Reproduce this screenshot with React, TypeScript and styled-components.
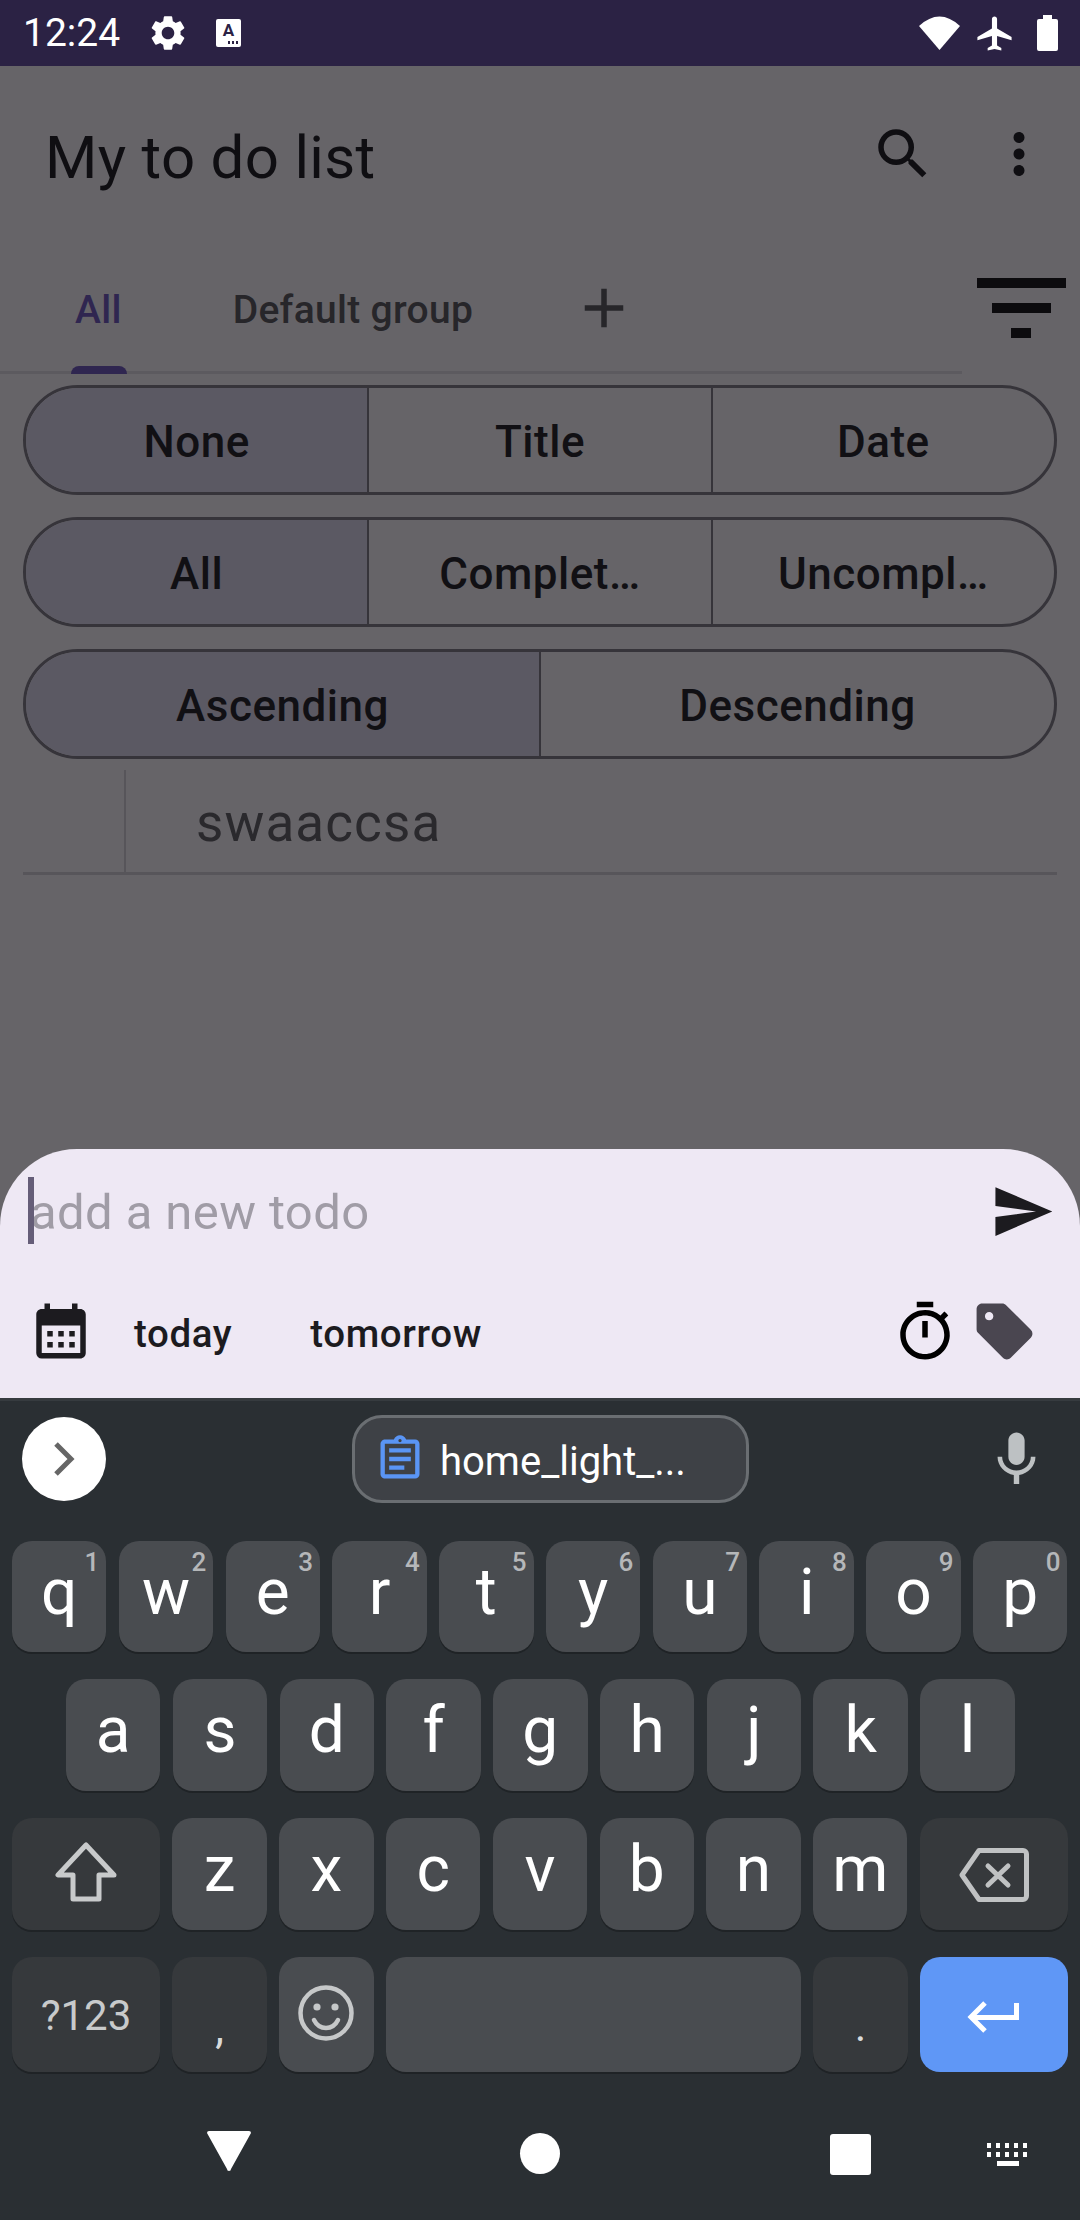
import React from "react";
import styled, { createGlobalStyle } from "styled-components";
import {
  MdSettings, MdAirplanemodeActive, MdSearch, MdMoreVert, MdAdd, MdSend,
  MdCalendarMonth, MdOutlineTimer, MdSell, MdMic, MdOutlineAssignment,
} from "react-icons/md";

const Global = createGlobalStyle`
  html, body { margin: 0; padding: 0; background: #666468; }
  body { font-family: Roboto, "Noto Sans", sans-serif; }
  * { box-sizing: border-box; }
`;

const Screen = styled.div`
  width: 1080px; height: 2220px; overflow: hidden;
  display: flex; flex-direction: column; background: #666468;
`;

const StatusBar = styled.div`
  height: 66px; flex: none; background: #2b2244; color: #fff;
  display: flex; align-items: center; padding-left: 23px; position: relative;
`;
const Time = styled.span`font-size: 39px; line-height: 46px; width: 95px; white-space: nowrap;`;
const Gear = styled(MdSettings)`margin-left: 29px; flex: none;`;
const ImeBadge = styled.div`
  width: 25px; height: 28px; margin-left: 27px; margin-top: -1px; background: #fff; border-radius: 2px;
  position: relative; color: #2b2244; font-size: 17px; font-weight: 700; line-height: 22px; text-align: center;
`;
const ImeDots = styled.i`
  position: absolute; right: 3px; bottom: 3px; width: 11px; height: 3px;
  background: radial-gradient(circle at center, #2b2244 1.3px, transparent 1.5px) 0 0 / 4px 3px repeat-x;
`;
const StatusRight = styled.div`margin-left: auto; display: flex; align-items: center;`;
const Plane = styled(MdAirplanemodeActive)`margin-left: 14px; margin-right: 22px; flex: none;`;
const Battery = styled.svg`margin-right: 22px; flex: none;`;

const Main = styled.div`flex: 1; min-height: 0; overflow: hidden; display: flex; flex-direction: column;`;

const AppBar = styled.div`
  height: 166px; flex: none; display: flex; align-items: flex-start; padding: 55px 28px 0 45px;
`;
const Title = styled.div`
  flex: 1; margin-top: 4px; font-size: 60px; line-height: 66px; letter-spacing: 0.3px; color: #0f0e12; white-space: nowrap;
`;
const BarIcon = styled.span`display: block; width: 66px; height: 66px; color: #0f0e12; margin-left: ${(p: { $gap?: number }) => p.$gap ?? 0}px;`;

const TabRow = styled.div`height: 142px; flex: none; display: flex; align-items: flex-start;`;
const TabStrip = styled.div`
  width: 962px; height: 142px; border-bottom: 3px solid #5c5a5f; position: relative;
  display: flex; align-items: flex-start; padding-left: 75px;
`;
const Tab = styled.div<{ $active?: boolean; $gap?: number }>`
  margin-top: 55px; margin-left: ${(p) => p.$gap ?? 0}px; font-size: 39px; line-height: 46px; font-weight: 500;
  letter-spacing: 0.3px; color: ${(p) => (p.$active ? "#2f2650" : "#27262a")}; white-space: nowrap;
`;
const TabIndicator = styled.div`
  position: absolute; left: 71px; bottom: -3px; width: 56px; height: 8px;
  background: #2f2650; border-radius: 8px 8px 0 0;
`;
const AddTab = styled(MdAdd)`margin-top: 43px; margin-left: 98px; color: #27262a; flex: none;`;
const FilterIcon = styled.svg`margin-top: 46px; margin-left: 15px; flex: none;`;

const Controls = styled.div`display: flex; flex-direction: column; gap: 22px; padding: 11px 23px 0;`;
const SegGroup = styled.div`
  height: 110px; border: 3px solid #36343a; border-radius: 55px; overflow: hidden; display: flex;
`;
const Seg = styled.div<{ $selected?: boolean }>`
  flex: 1; min-width: 0; display: flex; align-items: center; justify-content: center; padding-top: 4px;
  background: ${(p) => (p.$selected ? "#5b5963" : "transparent")};
  font-size: 44px; font-weight: 500; letter-spacing: 0.5px; color: #111014; white-space: nowrap;
  & + & { border-left: 2px solid #36343a; }
`;

const TodoRow = styled.div`
  height: 105px; margin: 11px 23px 0; flex: none; border-bottom: 3px solid #57555a; display: flex;
`;
const Slot = styled.div`width: 103px; border-right: 2px solid #57555a; flex: none;`;
const TodoText = styled.div`
  margin-left: 70px; margin-top: 23px; font-size: 53px; line-height: 60px; color: #2a292d; letter-spacing: 1.1px;
`;

const Sheet = styled.div`
  height: 249px; flex: none; background: #eee8f4; border-radius: 77px 77px 0 0;
  padding-top: 30px; display: flex; flex-direction: column; position: relative;
`;
const InputRow = styled.div`display: flex; align-items: flex-start; padding: 0 25px 0 30px; height: 65px;`;
const Caret = styled.div`position: absolute; left: 28px; top: 28px; width: 6px; height: 67px; background: #655d78;`;
const Placeholder = styled.div`margin-top: 6px; font-size: 49px; line-height: 56px; letter-spacing: 0.4px; color: #a09ca6; flex: 1;`;
const SendIcon = styled(MdSend)`color: #1c1b1f; flex: none;`;
const ActionRow = styled.div`display: flex; align-items: flex-start; padding: 0 42px 0 28px; margin-top: 54px;`;
const CalIcon = styled(MdCalendarMonth)`color: #1c1b1f; flex: none;`;
const DateChip = styled.div<{ $gap: number }>`
  margin-left: ${(p) => p.$gap}px; margin-top: 13px; font-size: 38.5px; line-height: 46px; font-weight: 500;
  letter-spacing: 0.6px; color: #1c1b1f;
`;
const TimerIcon = styled(MdOutlineTimer)`margin-left: auto; margin-top: 1px; color: #000; flex: none;`;
const TagIcon = styled(MdSell)`margin-left: 13px; color: #4a4650; flex: none;`;

const Keyboard = styled.div`
  height: 822px; flex: none; background: #2a2f33; border-top: 3px solid #363b3f; display: flex; flex-direction: column;
`;
const SuggestRow = styled.div`
  display: flex; align-items: center; height: 88px; margin-top: 14px; padding-right: 31px; flex: none;
`;
const Expand = styled.div`
  width: 84px; height: 84px; margin-left: 22px; border-radius: 50%; background: #fff;
  display: flex; align-items: center; justify-content: center; flex: none;
`;
const ClipChip = styled.div`
  width: 397px; height: 88px; margin-left: 246px; background: #3e4146; border: 3px solid #6a6e72; border-radius: 30px;
  display: flex; align-items: center; padding-left: 19px; flex: none;
`;
const ClipIcon = styled(MdOutlineAssignment)`color: #5a95f5; flex: none;`;
const ClipText = styled.span`margin-left: 14px; margin-top: 4px; font-size: 40px; color: #fff; white-space: nowrap;`;
const MicIcon = styled(MdMic)`margin-left: auto; color: #bdc1c3; flex: none;`;

const KeyGrid = styled.div`display: flex; flex-direction: column; gap: 27px; margin-top: 38px; padding: 0 12px;`;
const KeyRow = styled.div<{ $h: number; $inset?: number }>`
  display: flex; gap: 12.4px; height: ${(p) => p.$h}px; padding-left: ${(p) => p.$inset ?? 0}px; flex: none;
`;
const Key = styled.div<{ $w?: number; $tone?: "light" | "dark" | "blue" }>`
  width: ${(p) => p.$w ?? 94.4}px; flex: none; position: relative; border-radius: 20px;
  background: ${(p) => (p.$tone === "dark" ? "#36393c" : p.$tone === "blue" ? "#5f97f6" : "#494c50")};
  box-shadow: ${(p) => (p.$tone === "blue" ? "none" : "0 2px 0 #1f2326")};
  display: flex; justify-content: center; align-items: flex-start;
  padding-top: 20px; font-size: 64px; line-height: 64px; color: #fff;
`;
const Hint = styled.span`
  position: absolute; top: 6px; right: 7px; font-size: 26px; line-height: 30px; font-weight: 500; color: #b5b7b9;
`;
const SymbolLabel = styled.span`margin-top: 14px; font-size: 42px; line-height: 50px; color: #c8cacb; white-space: nowrap;`;
const PunctLabel = styled.span<{ $top: number }>`margin-top: ${(p) => p.$top}px; font-size: 44px; line-height: 50px; color: #d8dadb;`;
const KeyIcon = styled.svg<{ $top: number }>`margin-top: ${(p) => p.$top - 20}px; flex: none;`;

const NavBar = styled.div`display: flex; align-items: flex-start; padding: 59px 0 0 207px;`;
const HomeDot = styled.div`width: 40px; height: 41px; margin: 2px 0 0 269px; border-radius: 50%; background: #fff;`;
const RecentBox = styled.div`width: 41px; height: 41px; margin: 3px 0 0 270px; border-radius: 3px; background: #fff;`;
const KbdGlyph = styled.svg`margin: 12px 0 0 116px; flex: none;`;

const row1 = [["q","1"],["w","2"],["e","3"],["r","4"],["t","5"],["y","6"],["u","7"],["i","8"],["o","9"],["p","0"]];
const row2 = ["a","s","d","f","g","h","j","k","l"];
const row3 = ["z","x","c","v","b","n","m"];

export default function App() {
  return (
    <Screen>
      <Global />
      <StatusBar>
        <Time>12:24</Time>
        <Gear size={42} />
        <ImeBadge>A<ImeDots /></ImeBadge>
        <StatusRight>
          <svg width="41" height="34" viewBox="0 0 41 34" fill="#fff"><path d="M20.5 34 0 10Q20.5-9 41 10Z" /></svg>
          <Plane size={41} />
          <Battery width="21" height="36" viewBox="0 0 21 36" fill="#fff">
            <path d="M6 0h9v4h4a2 2 0 0 1 2 2v28a2 2 0 0 1-2 2H2a2 2 0 0 1-2-2V6a2 2 0 0 1 2-2h4z" />
          </Battery>
        </StatusRight>
      </StatusBar>
      <Main>
        <AppBar>
          <Title>My to do list</Title>
          <BarIcon><MdSearch size={66} /></BarIcon>
          <BarIcon $gap={50}><MdMoreVert size={66} /></BarIcon>
        </AppBar>
        <TabRow>
          <TabStrip>
            <Tab $active>All</Tab>
            <Tab $gap={111}>Default group</Tab>
            <AddTab size={66} />
            <TabIndicator />
          </TabStrip>
          <FilterIcon width="89" height="60" viewBox="0 0 89 60" fill="#0c0b0e">
            <rect x="0" y="0" width="89" height="10" />
            <rect x="15" y="25" width="59" height="10" />
            <rect x="34" y="50" width="20" height="10" />
          </FilterIcon>
        </TabRow>
        <Controls>
          <SegGroup>
            <Seg $selected>None</Seg>
            <Seg>Title</Seg>
            <Seg>Date</Seg>
          </SegGroup>
          <SegGroup>
            <Seg $selected>All</Seg>
            <Seg>Complet…</Seg>
            <Seg>Uncompl…</Seg>
          </SegGroup>
          <SegGroup>
            <Seg $selected>Ascending</Seg>
            <Seg>Descending</Seg>
          </SegGroup>
        </Controls>
        <TodoRow>
          <Slot />
          <TodoText>swaaccsa</TodoText>
        </TodoRow>
      </Main>
      <Sheet>
        <Caret />
        <InputRow>
          <Placeholder>add a new todo</Placeholder>
          <SendIcon size={65} />
        </InputRow>
        <ActionRow>
          <CalIcon size={66} />
          <DateChip $gap={40}>today</DateChip>
          <DateChip $gap={78}>tomorrow</DateChip>
          <TimerIcon size={66} />
          <TagIcon size={67} />
        </ActionRow>
      </Sheet>
      <Keyboard>
        <SuggestRow>
          <Expand>
            <svg width="22" height="34" viewBox="0 0 22 34" fill="none" stroke="#666" strokeWidth="5"><path d="M3 2 18 17 3 32" /></svg>
          </Expand>
          <ClipChip>
            <ClipIcon size={52} />
            <ClipText>home_light_...</ClipText>
          </ClipChip>
          <MicIcon size={65} />
        </SuggestRow>
        <KeyGrid>
          <KeyRow $h={111}>
            {row1.map(([k, n]) => <Key key={k}>{k}<Hint>{n}</Hint></Key>)}
          </KeyRow>
          <KeyRow $h={112} $inset={54}>
            {row2.map((k) => <Key key={k}>{k}</Key>)}
          </KeyRow>
          <KeyRow $h={112}>
            <Key $w={148} $tone="dark">
              <KeyIcon $top={24} width="62" height="60" viewBox="0 0 62 60" fill="none" stroke="#c8cacb" strokeWidth="5" strokeLinejoin="round">
                <path d="M31 3 3 33h15v24h26V33h15z" />
              </KeyIcon>
            </Key>
            {row3.map((k) => <Key key={k}>{k}</Key>)}
            <Key $w={148} $tone="dark">
              <KeyIcon $top={30} width="70" height="54" viewBox="0 0 70 54" fill="none" stroke="#c0c2c3" strokeWidth="5" strokeLinejoin="round">
                <path d="M20 2.500h44a3.500 3.500 0 0 1 3.500 3.500v42a3.500 3.500 0 0 1-3.500 3.500H20L3 27z" />
                <path d="M29 18l20 19M49 18 29 37" strokeWidth="5" strokeLinecap="round" />
              </KeyIcon>
            </Key>
          </KeyRow>
          <KeyRow $h={115}>
            <Key $w={148} $tone="dark"><SymbolLabel>?123</SymbolLabel></Key>
            <Key $tone="dark"><PunctLabel $top={26}>,</PunctLabel></Key>
            <Key>
              <KeyIcon $top={28} width="56" height="56" viewBox="0 0 56 56" fill="none" stroke="#c6c8c9" strokeWidth="4.5">
                <circle cx="28" cy="28" r="25.500" />
                <circle cx="19" cy="22" r="3.600" fill="#c6c8c9" stroke="none" />
                <circle cx="37" cy="22" r="3.600" fill="#c6c8c9" stroke="none" />
                <path d="M16 35c3 6 7 8 12 8s9-2 12-8" strokeLinecap="round" />
              </KeyIcon>
            </Key>
            <Key $w={415} />
            <Key $tone="dark"><PunctLabel $top={24}>.</PunctLabel></Key>
            <Key $w={148} $tone="blue">
              <KeyIcon $top={44} width="54" height="32" viewBox="0 0 54 32" fill="none" stroke="#fff" strokeWidth="5">
                <path d="M49.500 2v14.500H5" />
                <path d="M18 2 4 16l14 14" />
              </KeyIcon>
            </Key>
          </KeyRow>
        </KeyGrid>
        <NavBar>
          <svg width="44" height="40" viewBox="0 0 44 40" fill="#fff"><path d="M2 0h40a2 2 0 0 1 2 2L24 38a2 2 0 0 1-4 0L0 2a2 2 0 0 1 2-2z" /></svg>
          <HomeDot />
          <RecentBox />
          <KbdGlyph width="42" height="23" viewBox="0 0 42 23" fill="#fff">
            {[0, 9, 18, 27, 36].map((x) => <rect key={`a${x}`} x={x} y="0" width="4" height="5" />)}
            {[0, 9, 18, 27, 36].map((x) => <rect key={`b${x}`} x={x} y="9" width="4" height="5" />)}
            <rect x="10" y="18" width="22" height="5" />
          </KbdGlyph>
        </NavBar>
      </Keyboard>
    </Screen>
  );
}
